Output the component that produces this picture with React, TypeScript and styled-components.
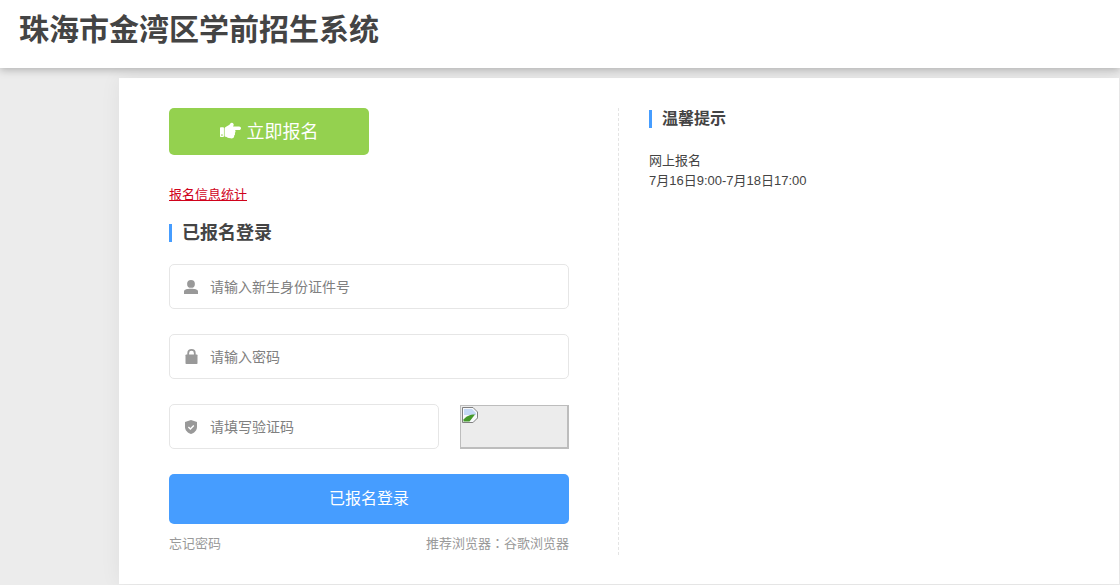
import React from 'react';
import styled, { createGlobalStyle } from 'styled-components';
import { FaHandPointRight } from 'react-icons/fa';

const GlobalStyle = createGlobalStyle`
  html, body {
    margin: 0;
    padding: 0;
    background: #ececec;
    font-family: "Liberation Sans", "Noto Sans CJK SC", sans-serif;
  }
  * {
    box-sizing: border-box;
  }
`;

const Page = styled.div`
  width: 1120px;
  height: 585px;
  overflow: hidden;
  background: #ececec;
  display: flex;
  flex-direction: column;
`;

const Header = styled.header`
  position: relative;
  z-index: 2;
  height: 68px;
  flex: none;
  background: #fff;
  box-shadow: 0 2px 8px rgba(0, 0, 0, 0.25);
  padding: 12px 19px 0;
`;

const SiteTitle = styled.h1`
  margin: 0;
  font-size: 30px;
  line-height: 36px;
  font-weight: 700;
  color: #444;
`;

const Main = styled.main`
  flex: 1;
  padding: 10px 1px 1px 119px;
  display: flex;
`;

const Card = styled.div`
  width: 1000px;
  background: #fff;
  box-shadow: 0 0 20px rgba(0, 0, 0, 0.06);
  padding: 30px 0 29px 50px;
  display: flex;
`;

const LoginColumn = styled.section`
  width: 400px;
  display: flex;
  flex-direction: column;
`;

const NoticeColumn = styled.section`
  margin-left: 49px;
  border-left: 1px dashed #e4e4e4;
  padding: 2px 0 0 30px;
  flex: 1;
`;

const SignupButton = styled.button`
  width: 200px;
  height: 47px;
  border: 0;
  border-radius: 5px;
  background: #94d14f;
  color: #fff;
  font-family: inherit;
  font-size: 18px;
  display: flex;
  align-items: center;
  justify-content: center;
  gap: 6px;
  padding: 0 0 3px;
`;

const StatsLink = styled.a`
  margin-top: 31px;
  font-size: 13px;
  line-height: 18px;
  color: #d0021b;
  text-decoration: underline;
  align-self: flex-start;
`;

const SectionTitle = styled.h2<{ $size: number; $top?: number }>`
  margin: ${({ $top }) => $top ?? 0}px 0 0;
  border-left: 3px solid #469dff;
  padding-left: 10px;
  height: 18px;
  font-size: ${({ $size }) => $size}px;
  line-height: 18px;
  font-weight: 700;
  color: #444;
`;

const Field = styled.div<{ $top: number }>`
  margin-top: ${({ $top }) => $top}px;
  display: flex;
  justify-content: space-between;
`;

const InputBox = styled.label<{ $width: number }>`
  width: ${({ $width }) => $width}px;
  height: 45px;
  border: 1px solid #e6e6e6;
  border-radius: 5px;
  background: #fff;
  display: flex;
  align-items: center;
  padding-left: 14px;
`;

const IconSlot = styled.span`
  width: 14px;
  height: 16px;
  margin-right: 12px;
  display: flex;
  align-items: center;
  justify-content: center;
`;

const Input = styled.input`
  flex: 1;
  min-width: 0;
  border: 0;
  outline: 0;
  padding: 0;
  background: transparent;
  font-family: inherit;
  font-size: 14px;
  color: #444;

  &::placeholder {
    color: #808080;
    opacity: 1;
  }
`;

const CaptchaImage = styled.div`
  width: 109px;
  height: 44px;
  margin-top: 1px;
  border: 1px solid #bdbdbd;
  border-right-width: 2px;
  border-bottom-width: 2px;
  background: #ececec;
  padding: 1px 0 0 1px;
`;

const LoginButton = styled.button`
  margin-top: 25px;
  height: 50px;
  border: 0;
  border-radius: 5px;
  background: #469dff;
  color: #fff;
  font-family: inherit;
  font-size: 16px;
  padding: 0 0 4px;
`;

const FooterRow = styled.div`
  margin-top: 11px;
  display: flex;
  justify-content: space-between;
  font-size: 13px;
  line-height: 18px;
  color: #999;
`;

const CenteredColon = styled.span`
  font-family: "Noto Sans CJK TC", sans-serif;
  line-height: 0;
`;

const NoticeText = styled.p`
  margin: 23px 0 0;
  font-size: 13px;
  line-height: 20px;
  color: #444;
`;

const UserIcon = () => (
  <svg width="14" height="14" viewBox="0 0 14 14" aria-hidden="true">
    <circle cx="7" cy="3.9" r="3.9" fill="#999" />
    <path d="M0 14 V11.5 C0 9.6 2.6 8.8 7 8.8 C11.4 8.8 14 9.6 14 11.5 V14 Z" fill="#999" />
  </svg>
);

const LockIcon = () => (
  <svg width="13" height="15" viewBox="0 0 13 15" aria-hidden="true">
    <path d="M3.2 6 V4.2 C3.2 2.1 4.5 0.9 6.5 0.9 C8.5 0.9 9.8 2.1 9.8 4.2 V6" fill="none" stroke="#999" strokeWidth="1.8" />
    <rect x="0.5" y="5.5" width="12" height="9.5" rx="0.8" fill="#999" />
  </svg>
);

const ShieldIcon = () => (
  <svg width="14" height="14" viewBox="0 0 14 14" aria-hidden="true">
    <path d="M7 0 L13 2 V7 C13 10.4 10.4 12.8 7 14 C3.6 12.8 1 10.4 1 7 V2 Z" fill="#999" />
    <path d="M4.4 7 L6.4 9 L9.8 5.4" fill="none" stroke="#fff" strokeWidth="1.4" />
  </svg>
);

const BrokenImageIcon = () => (
  <svg width="16" height="16" viewBox="0 0 16 16" aria-hidden="true">
    <path d="M0.5 0.5 H11 L15.5 5 V15.5 H0.5 Z" fill="#f7f9fc" stroke="#808080" />
    <path d="M2 2 H10 L14 6 V8 H2 Z" fill="#c5d9f5" />
    <path d="M1.5 14.5 V12.5 C4 9.5 7.5 7.5 13 7.5 L7.5 14.5 Z" fill="#45992b" />
    <path d="M10.5 16 L16 16 V10.5 Z" fill="#ececec" />
    <path d="M11 15.5 L15.5 11" stroke="#808080" fill="none" />
  </svg>
);

const App: React.FC = () => {
  return (
    <>
      <GlobalStyle />
      <Page>
        <Header>
          <SiteTitle>珠海市金湾区学前招生系统</SiteTitle>
        </Header>
        <Main>
          <Card>
            <LoginColumn>
              <SignupButton type="button">
                <FaHandPointRight size={21} />
                立即报名
              </SignupButton>
              <StatsLink href="#">报名信息统计</StatsLink>
              <SectionTitle $size={18} $top={20}>已报名登录</SectionTitle>
              <Field $top={22}>
                <InputBox $width={400}>
                  <IconSlot><UserIcon /></IconSlot>
                  <Input placeholder="请输入新生身份证件号" />
                </InputBox>
              </Field>
              <Field $top={25}>
                <InputBox $width={400}>
                  <IconSlot><LockIcon /></IconSlot>
                  <Input type="password" placeholder="请输入密码" />
                </InputBox>
              </Field>
              <Field $top={25}>
                <InputBox $width={270}>
                  <IconSlot><ShieldIcon /></IconSlot>
                  <Input placeholder="请填写验证码" />
                </InputBox>
                <CaptchaImage>
                  <BrokenImageIcon />
                </CaptchaImage>
              </Field>
              <LoginButton type="button">已报名登录</LoginButton>
              <FooterRow>
                <span>忘记密码</span>
                <span>推荐浏览器<CenteredColon>：</CenteredColon>谷歌浏览器</span>
              </FooterRow>
            </LoginColumn>
            <NoticeColumn>
              <SectionTitle $size={16}>温馨提示</SectionTitle>
              <NoticeText>
                网上报名
                <br />
                7月16日9:00-7月18日17:00
              </NoticeText>
            </NoticeColumn>
          </Card>
        </Main>
      </Page>
    </>
  );
};

export default App;
